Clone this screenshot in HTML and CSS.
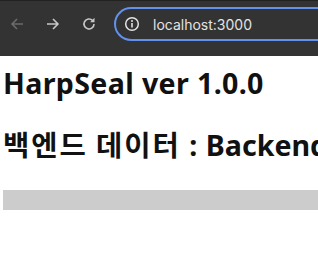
FILE: index.html
```html
<!DOCTYPE html>
<html lang="ko">
<head>
  <meta charset="UTF-8" />
  <title>HarpSeal</title>
  <link rel="stylesheet" href="styles.css">
</head>
<body>
  <div class="toolbar">
    <div class="navs">
      <button class="nav disabled" aria-label="Back">
        <svg width="16" height="16" viewBox="0 0 16 16"><path d="M14 8H3M8 3L3 8l5 5" fill="none" stroke="currentColor" stroke-width="1.6"/></svg>
      </button>
      <button class="nav" aria-label="Forward">
        <svg width="16" height="16" viewBox="0 0 16 16"><path d="M2 8h11M8 3l5 5-5 5" fill="none" stroke="currentColor" stroke-width="1.6"/></svg>
      </button>
      <button class="nav" aria-label="Reload">
        <svg width="16" height="16" viewBox="0 0 16 16"><path d="M13 8a5 5 0 1 1-1.5-3.6" fill="none" stroke="currentColor" stroke-width="1.6"/><path d="M13.5 1.8v4.4H9.1z" fill="currentColor"/></svg>
      </button>
    </div>
    <div class="omnibox">
      <svg class="info" width="16" height="16" viewBox="0 0 16 16"><circle cx="8" cy="8" r="6.3" fill="none" stroke="currentColor" stroke-width="1.5"/><path d="M8 7v4.4" stroke="currentColor" stroke-width="1.6"/><circle cx="8" cy="4.9" r="1" fill="currentColor"/></svg>
      <span class="url">localhost:3000</span>
    </div>
  </div>
  <main class="page">
    <h1 class="title">HarpSeal ver 1.0.0</h1>
    <h1><span class="ko">백엔드 데이터</span><span class="sep"> : </span>Backend Data</h1>
    <div class="bar"></div>
  </main>
</body>
</html>
```
FILE: styles.css
```css
body {
  margin: 0;
  background-color: #fff;
  overflow: hidden;
}
.toolbar {
  height: 56px;
  background-color: #333;
  border-top: 1px solid #222;
  box-sizing: border-box;
  display: flex;
  align-items: flex-start;
  padding: 6px 0 0 9px;
  gap: 17px;
}
.navs {
  display: flex;
  gap: 20px;
}
.nav {
  width: 16px;
  height: 34px;
  padding: 0;
  border: none;
  background: none;
  color: #c7c7c7;
  display: flex;
  align-items: center;
}
.nav.disabled {
  color: #6b6b6b;
}
.omnibox {
  flex: 1;
  height: 34px;
  box-sizing: border-box;
  border: 2px solid #6391ee;
  border-right: none;
  border-radius: 17px 0 0 17px;
  display: flex;
  align-items: center;
  padding-left: 8px;
  gap: 13px;
  color: #e3e3e3;
}
.url {
  font-family: Inter, "Noto Sans", sans-serif;
  font-size: 14px;
}
.page {
  padding: 0 0 0 3px;
  font-family: "Noto Sans", "Noto Sans CJK KR", sans-serif;
}
h1 {
  margin: 0;
  font-size: 28.6px;
  font-weight: 700;
  color: #111;
  line-height: 1.3;
  white-space: nowrap;
}
.title {
  letter-spacing: 0.35px;
}
.page h1:first-child {
  margin-top: 8px;
}
.page h1 + h1 {
  margin-top: 24px;
}
.ko {
  font-family: "Noto Sans CJK KR", sans-serif;
  letter-spacing: 2px;
  word-spacing: -2px;
}
.sep {
  word-spacing: 1px;
}
.bar {
  height: 20px;
  margin-top: 27px;
  background-color: #ccc;
}
```
